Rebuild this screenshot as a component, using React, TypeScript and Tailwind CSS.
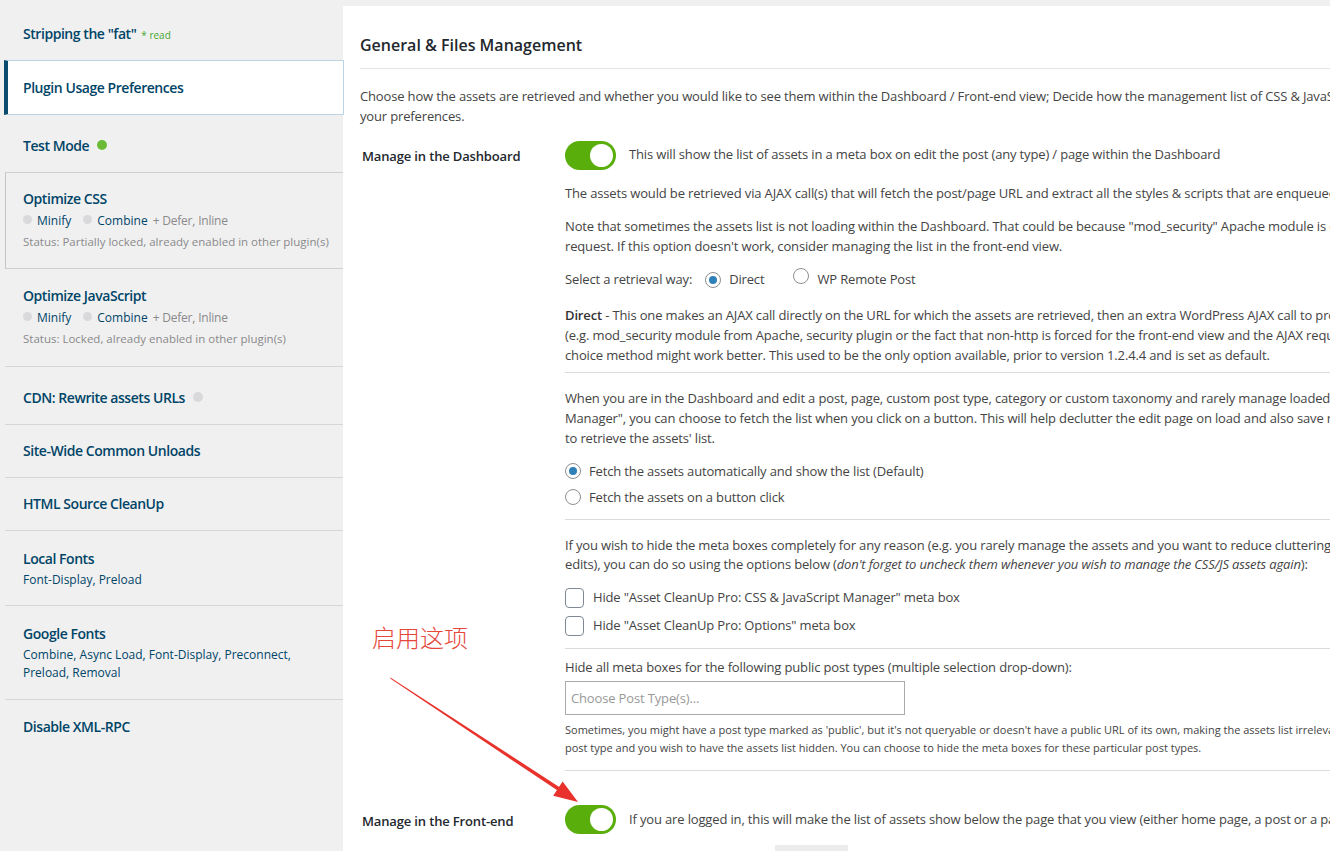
import React from "react";

const FONT = "font-['Open_Sans','Noto_Sans',sans-serif]";

function NavTitle({ children }: { children: React.ReactNode }) {
  return <div className="text-[14px] leading-[20px] font-semibold tracking-[-0.45px] text-[#004567]">{children}</div>;
}

function Dot({ color }: { color: string }) {
  return <span className={`inline-block w-[10px] h-[10px] rounded-full ${color}`} />;
}

function OptionLine() {
  return (
    <div className="flex items-center text-[12px] leading-[18px] mt-[3px]">
      <span className="inline-block w-[9px] h-[9px] rounded-full bg-[#d9d9dc] mr-[5px] -mt-[4px]" />
      <span className="text-[#004567]">Minify</span>
      <span className="inline-block w-[9px] h-[9px] rounded-full bg-[#d9d9dc] ml-[12px] mr-[5px] -mt-[4px]" />
      <span className="text-[#004567]">Combine</span>
      <span className="text-[#8a8a8a] ml-[5px] tracking-[-0.2px]">+ Defer, Inline</span>
    </div>
  );
}

function Sidebar() {
  return (
    <aside className="w-[343px] shrink-0 relative z-10">
      {/* Stripping the fat */}
      <div className="h-[60px] pl-[23px] pt-[24px]">
        <div className="flex items-baseline">
          <NavTitle>Stripping the "fat"</NavTitle>
          <span className="ml-[5px] text-[10px] text-[#46a62e]">* read</span>
        </div>
      </div>
      {/* active item */}
      <div className="h-[55px] ml-[4px] mr-[-1px] bg-white border border-[#bcd3e3] border-l-[4px] border-l-[#0a4b6e] pl-[15px] flex items-center">
        <NavTitle>Plugin Usage Preferences</NavTitle>
      </div>
      <div className="h-[57px] pl-[23px] pt-[4px] flex items-center">
        <NavTitle>Test Mode</NavTitle>
        <span className="ml-[8px] -mt-[3px]"><Dot color="bg-[#6bbb36]" /></span>
      </div>
      {/* Optimize CSS */}
      <div className="h-[97px] ml-[5px] border border-r-0 border-[#cfcfd2] border-l-[#c5c5c8] pl-[17px] pt-[16px]">
        <NavTitle>Optimize CSS</NavTitle>
        <OptionLine />
        <div className="text-[11.5px] leading-[16px] text-[#8a8a8a] mt-[4px]">Status: Partially locked, already enabled in other plugin(s)</div>
      </div>
      {/* Optimize JS */}
      <div className="h-[98px] ml-[5px] border-b border-[#d6d6d8] pl-[18px] pt-[17px]">
        <NavTitle>Optimize JavaScript</NavTitle>
        <OptionLine />
        <div className="text-[11.5px] leading-[16px] text-[#8a8a8a] mt-[4px]">Status: Locked, already enabled in other plugin(s)</div>
      </div>
      <div className="h-[58px] ml-[5px] border-b border-[#d6d6d8] pl-[18px] pt-[4px] flex items-center">
        <NavTitle>CDN: Rewrite assets URLs</NavTitle>
        <span className="ml-[8px] -mt-[4px]"><Dot color="bg-[#d9d9dc]" /></span>
      </div>
      <div className="h-[53px] ml-[5px] border-b border-[#d6d6d8] pl-[18px] flex items-center">
        <NavTitle>Site-Wide Common Unloads</NavTitle>
      </div>
      <div className="h-[53px] ml-[5px] border-b border-[#d6d6d8] pl-[18px] flex items-center">
        <NavTitle>HTML Source CleanUp</NavTitle>
      </div>
      <div className="h-[75px] ml-[5px] border-b border-[#d6d6d8] pl-[18px] pt-[18px]">
        <NavTitle>Local Fonts</NavTitle>
        <div className="text-[12px] leading-[18px] text-[#004567] mt-[2px]">Font-Display, Preload</div>
      </div>
      <div className="h-[94px] ml-[5px] border-b border-[#d6d6d8] pl-[18px] pt-[18px]">
        <NavTitle>Google Fonts</NavTitle>
        <div className="text-[12px] leading-[18px] text-[#004567] mt-[2px]">
          Combine, Async Load, Font-Display, Preconnect,
          <br />
          Preload, Removal
        </div>
      </div>
      <div className="h-[53px] pl-[23px] flex items-center">
        <NavTitle>Disable XML-RPC</NavTitle>
      </div>
    </aside>
  );
}

function Toggle() {
  return (
    <div className="w-[51px] h-[29px] rounded-full bg-[#5aae0b] flex items-center justify-end pr-[3px] shrink-0">
      <div className="w-[23px] h-[23px] rounded-full bg-white" />
    </div>
  );
}

function Radio({ checked }: { checked?: boolean }) {
  return (
    <span className="inline-flex items-center justify-center w-[16px] h-[16px] rounded-full border border-[#8c8f94] bg-white shrink-0">
      {checked && <span className="w-[8px] h-[8px] rounded-full bg-[#2f7fb8]" />}
    </span>
  );
}

function Checkbox() {
  return <span className="inline-block w-[19px] h-[20px] rounded-[4px] border border-[#7e8993] bg-white shrink-0" />;
}

function Lines({ lines, className = "" }: { lines: React.ReactNode[]; className?: string }) {
  return (
    <div className={`whitespace-nowrap ${className}`}>
      {lines.map((l, i) => (
        <div key={i}>{l}</div>
      ))}
    </div>
  );
}

function Main() {
  return (
    <main className="mt-[6px] bg-white w-[1100px] shrink-0 pl-[17px] pt-[27px] text-[13px] leading-[20px] tracking-[-0.15px] text-[#444]">
      <h2 className="text-[16px] leading-[24px] font-semibold tracking-normal text-[#23282d]">General &amp; Files Management</h2>
      <div className="mt-[11px] border-t border-[#e2e4e7]" />
      <Lines
        className="mt-[17px]"
        lines={[
          "Choose how the assets are retrieved and whether you would like to see them within the Dashboard / Front-end view; Decide how the management list of CSS & JavaScript files will show up and get sorted, depending on",
          "your preferences.",
        ]}
      />

      {/* Manage in the Dashboard */}
      <div className="flex mt-[15px]">
        <div className="w-[205px] shrink-0 pl-[2px] pt-[5px] font-semibold text-[#23282d]">Manage in the Dashboard</div>
        <div className="flex-1">
          <div className="flex items-center">
            <Toggle />
            <span className="ml-[13px] -mt-[3px] whitespace-nowrap">This will show the list of assets in a meta box on edit the post (any type) / page within the Dashboard</span>
          </div>
          <Lines className="mt-[13px]" lines={["The assets would be retrieved via AJAX call(s) that will fetch the post/page URL and extract all the styles & scripts that are enqueued."]} />
          <Lines
            className="mt-[13px]"
            lines={[
              "Note that sometimes the assets list is not loading within the Dashboard. That could be because \"mod_security\" Apache module is enabled or some security plugins are blocking the AJAX",
              "request. If this option doesn't work, consider managing the list in the front-end view.",
            ]}
          />
          <div className="mt-[12px] flex items-center whitespace-nowrap">
            <span>Select a retrieval way:</span>
            <span className="ml-[13px]"><Radio checked /></span>
            <span className="ml-[8px]">Direct</span>
            <span className="ml-[29px]"><Radio /></span>
            <span className="ml-[8px]">WP Remote Post</span>
          </div>
          <Lines
            className="mt-[16px]"
            lines={[
              <>
                <span className="font-semibold text-[#333]">Direct</span> - This one makes an AJAX call directly on the URL for which the assets are retrieved, then an extra WordPress AJAX call to process the list.
              </>,
              "(e.g. mod_security module from Apache, security plugin or the fact that non-http is forced for the front-end view and the AJAX request will be blocked), then this second",
              "choice method might work better. This used to be the only option available, prior to version 1.2.4.4 and is set as default.",
            ]}
          />
          <div className="mt-[7px] border-t border-[#dcdcde]" />
          <Lines
            className="mt-[15px]"
            lines={[
              "When you are in the Dashboard and edit a post, page, custom post type, category or custom taxonomy and rarely manage loaded CSS/JS from the \"Asset CleanUp Pro: CSS & JavaScript",
              "Manager\", you can choose to fetch the list when you click on a button. This will help declutter the edit page on load and also save resources as AJAX calls",
              "to retrieve the assets' list.",
            ]}
          />
          <div className="mt-[10px]">
            <div className="h-[26px] flex items-center whitespace-nowrap">
              <Radio checked />
              <span className="ml-[8px]">Fetch the assets automatically and show the list (Default)</span>
            </div>
            <div className="h-[26px] flex items-center whitespace-nowrap">
              <Radio />
              <span className="ml-[8px]">Fetch the assets on a button click</span>
            </div>
          </div>
          <div className="mt-[9px] border-t border-[#dcdcde]" />
          <Lines
            className="mt-[16px] leading-[19px]"
            lines={[
              "If you wish to hide the meta boxes completely for any reason (e.g. you rarely manage the assets and you want to reduce cluttering on the post/page",
              <>
                edits), you can do so using the options below (<em>don't forget to uncheck them whenever you wish to manage the CSS/JS assets again</em>):
              </>,
            ]}
          />
          <div className="mt-[10px]">
            <div className="h-[28px] flex items-center whitespace-nowrap">
              <Checkbox />
              <span className="ml-[9px] -mt-[2px]">Hide "Asset CleanUp Pro: CSS &amp; JavaScript Manager" meta box</span>
            </div>
            <div className="h-[28px] flex items-center whitespace-nowrap">
              <Checkbox />
              <span className="ml-[9px] -mt-[2px]">Hide "Asset CleanUp Pro: Options" meta box</span>
            </div>
          </div>
          <div className="mt-[8px] border-t border-[#dcdcde]" />
          <div className="mt-[8px] whitespace-nowrap">Hide all meta boxes for the following public post types (multiple selection drop-down):</div>
          <div className="mt-[4px] w-[340px] h-[34px] border border-[#aaa] flex items-center pl-[5px] text-[#999]">Choose Post Type(s)...</div>
          <Lines
            className="mt-[6px] text-[11px] leading-[18px] tracking-normal"
            lines={[
              "Sometimes, you might have a post type marked as 'public', but it's not queryable or doesn't have a public URL of its own, making the assets list irrelevant. Or, you have a",
              "post type and you wish to have the assets list hidden. You can choose to hide the meta boxes for these particular post types.",
            ]}
          />
          <div className="mt-[13px] border-t border-[#dcdcde]" />
        </div>
      </div>

      {/* Manage in the Front-end */}
      <div className="flex mt-[34px]">
        <div className="w-[205px] shrink-0 pl-[2px] pt-[6px] font-semibold text-[#23282d]">Manage in the Front-end</div>
        <div className="flex-1">
          <div className="flex items-center">
            <Toggle />
            <span className="ml-[13px] -mt-[2px] whitespace-nowrap">If you are logged in, this will make the list of assets show below the page that you view (either home page, a post or a page).</span>
          </div>
          <div className="ml-[210px] mt-[11px] w-[73px] h-[10px] bg-[#ececec]" />
        </div>
      </div>
    </main>
  );
}

export default function App() {
  return (
    <div className={`relative w-[1330px] h-[851px] overflow-hidden bg-[#f0f0f1] flex ${FONT}`}>
      <Sidebar />
      <Main />

      {/* annotation: label and arrow */}
      <div className="absolute left-[372px] top-[621px] text-[24px] leading-[32px] font-light text-[#e5473a] font-['Noto_Sans_CJK_SC',sans-serif]">
        启用这项
      </div>
      <svg className="absolute left-0 top-0 pointer-events-none" width="1330" height="851" viewBox="0 0 1330 851">
        <polygon points="390,677.2 390.6,678.8 557.6,790.6 559.6,787.2" fill="#e8322b" />
        <polygon points="578,802 553.2,795.8 562.6,781.6" fill="#e8322b" />
      </svg>
    </div>
  );
}
